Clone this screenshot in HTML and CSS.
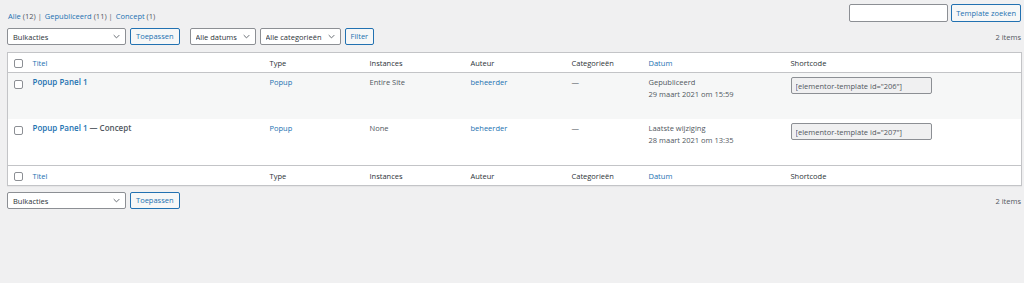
FILE: index.html
```html
<!DOCTYPE html>
<html lang="nl">
<head>
    <meta charset="UTF-8">
    <title>Templates</title>
    <link rel="stylesheet" href="styles.css">
</head>
<body>
    <div class="wrap">

        <!-- Filters en zoeken -->
        <div class="top-bar">
            <ul class="subsubsub">
                <li><a href="#" class="current">Alle <span class="count">(12)</span></a> |</li>
                <li><a href="#">Gepubliceerd <span class="count">(11)</span></a> |</li>
                <li><a href="#">Concept <span class="count">(1)</span></a></li>
            </ul>
            <div class="search-box">
                <input type="search" class="search-input">
                <button class="button">Template zoeken</button>
            </div>
        </div>

        <div class="tablenav">
            <div class="actions">
                <span class="select-wrap wide">
                    <select><option>Bulkacties</option></select>
                    <svg class="chevron" viewBox="0 0 10 6"><path d="M1 1l4 4 4-4" /></svg>
                </span>
                <button class="button">Toepassen</button>
            </div>
            <div class="actions">
                <span class="select-wrap dates">
                    <select><option>Alle datums</option></select>
                    <svg class="chevron" viewBox="0 0 10 6"><path d="M1 1l4 4 4-4" /></svg>
                </span>
                <span class="select-wrap cats">
                    <select><option>Alle categorieën</option></select>
                    <svg class="chevron" viewBox="0 0 10 6"><path d="M1 1l4 4 4-4" /></svg>
                </span>
                <button class="button">Filter</button>
            </div>
            <div class="num-items">2 items</div>
        </div>

        <!-- Tabel met templates -->
        <table class="list-table">
            <colgroup>
                <col class="c-cb">
                <col class="c-title">
                <col class="c-type">
                <col class="c-inst">
                <col class="c-author">
                <col class="c-cat">
                <col class="c-date">
                <col class="c-short">
            </colgroup>
            <thead>
                <tr>
                    <td class="check"><span class="checkbox"></span></td>
                    <th><a href="#">Titel</a></th>
                    <th>Type</th>
                    <th>Instances</th>
                    <th>Auteur</th>
                    <th>Categorieën</th>
                    <th><a href="#">Datum</a></th>
                    <th>Shortcode</th>
                </tr>
            </thead>
            <tbody>
                <tr class="alt">
                    <td class="check"><span class="checkbox"></span></td>
                    <td><a href="#" class="row-title">Popup Panel 1</a></td>
                    <td><a href="#">Popup</a></td>
                    <td>Entire Site</td>
                    <td><a href="#">beheerder</a></td>
                    <td>—</td>
                    <td>Gepubliceerd<br>29 maart 2021 om 15:59</td>
                    <td><input type="text" class="shortcode" value='[elementor-template id="206"]' readonly></td>
                </tr>
                <tr>
                    <td class="check"><span class="checkbox"></span></td>
                    <td><a href="#" class="row-title">Popup Panel 1</a> <span class="state">— Concept</span></td>
                    <td><a href="#">Popup</a></td>
                    <td>None</td>
                    <td><a href="#">beheerder</a></td>
                    <td>—</td>
                    <td>Laatste wijziging<br>28 maart 2021 om 13:35</td>
                    <td><input type="text" class="shortcode" value='[elementor-template id="207"]' readonly></td>
                </tr>
            </tbody>
            <tfoot>
                <tr>
                    <td class="check"><span class="checkbox"></span></td>
                    <th><a href="#">Titel</a></th>
                    <th>Type</th>
                    <th>Instances</th>
                    <th>Auteur</th>
                    <th>Categorieën</th>
                    <th><a href="#">Datum</a></th>
                    <th>Shortcode</th>
                </tr>
            </tfoot>
        </table>

        <div class="tablenav bottom">
            <div class="actions">
                <span class="select-wrap wide">
                    <select><option>Bulkacties</option></select>
                    <svg class="chevron" viewBox="0 0 10 6"><path d="M1 1l4 4 4-4" /></svg>
                </span>
                <button class="button">Toepassen</button>
            </div>
            <div class="num-items">2 items</div>
        </div>

    </div>
</body>
</html>
```

FILE: styles.css
```css
/* Basis */
body {
    font-family: "Open Sans", "Noto Sans", Arial, sans-serif;
    font-size: 7.5px;
    background-color: #f0f0f1;
    color: #3c434a;
    margin: 0;
    padding: 0;
}

a {
    color: #2271b1;
    text-decoration: none;
}

.wrap {
    padding: 3px 3px 0 7px;
}

/* Bovenste balk */
.top-bar {
    display: flex;
    justify-content: space-between;
    align-items: flex-start;
    height: 25px;
}

.subsubsub {
    list-style: none;
    margin: 0;
    padding: 7px 0 0 1px;
    display: flex;
    gap: 3px;
    color: #646970;
    line-height: 12px;
}

.subsubsub .count {
    color: #50575e;
}

.search-box {
    display: flex;
    gap: 3px;
    margin-top: 1px;
}

.search-input {
    width: 99px;
    height: 18px;
    box-sizing: border-box;
    border: 1px solid #8c8f94;
    border-radius: 2px;
    background: #fff;
    margin: 0;
}

.button {
    font-family: inherit;
    font-size: 7.5px;
    height: 17px;
    padding: 0 5px;
    margin: 0;
    color: #2271b1;
    border: 1px solid #2271b1;
    border-radius: 2px;
    background: #f6f7f7;
    box-sizing: border-box;
    line-height: 15px;
}

.search-box .button {
    height: 18px;
    padding: 0 4px;
}

/* Tablenav */
.tablenav {
    display: flex;
    align-items: center;
    gap: 10px;
    height: 17px;
    margin-bottom: 7px;
}

.tablenav.bottom {
    margin-top: 6px;
}

.actions {
    display: flex;
    align-items: center;
    gap: 4px;
}

.num-items {
    margin-left: auto;
    color: #50575e;
    padding-right: 0;
}

.select-wrap {
    position: relative;
    display: inline-block;
    height: 17px;
}

.select-wrap select {
    appearance: none;
    -webkit-appearance: none;
    font-family: inherit;
    font-size: 7.5px;
    color: #2c3338;
    background: #fff;
    border: 1px solid #8c8f94;
    border-radius: 2px;
    height: 17px;
    padding: 0 0 0 5px;
    margin: 0;
    box-sizing: border-box;
    width: 100%;
}

.select-wrap.wide { width: 119px; }
.select-wrap.dates { width: 66px; }
.select-wrap.cats { width: 81px; }

.chevron {
    position: absolute;
    right: 6px;
    top: 6px;
    width: 7px;
    height: 5px;
    fill: none;
    stroke: #646970;
    stroke-width: 1.4;
    pointer-events: none;
}

/* Tabel */
.list-table {
    width: 1014px;
    border-collapse: collapse;
    table-layout: fixed;
    background: #fff;
    border: 1px solid #c3c4c7;
    box-shadow: 0 1px 1px rgba(0, 0, 0, 0.04);
}

.c-cb { width: 20px; }
.c-title { width: 237px; }
.c-type { width: 100px; }
.c-inst { width: 101px; }
.c-author { width: 101px; }
.c-cat { width: 77px; }
.c-date { width: 142px; }
.c-short { width: 236px; }

.list-table th {
    font-weight: normal;
    text-align: left;
    color: #2c3338;
    height: 19px;
    padding: 0 5px;
    line-height: 12px;
}

.list-table thead tr {
    border-bottom: 1px solid #c3c4c7;
}

.list-table tfoot tr {
    border-top: 1px solid #c3c4c7;
}

.list-table td {
    vertical-align: top;
    padding: 3px 5px 0;
    height: 43px;
    line-height: 12px;
    color: #50575e;
}

.list-table thead td,
.list-table tfoot td {
    height: 19px;
    padding-top: 0;
    vertical-align: middle;
}

.list-table tr.alt {
    background: #f6f7f7;
}

.list-table td.check {
    padding: 3px 0 0 6px;
}

.list-table thead td.check,
.list-table tfoot td.check {
    padding: 0 0 0 6px;
}

.checkbox {
    display: inline-block;
    width: 9px;
    height: 9px;
    border: 1px solid #8c8f94;
    border-radius: 2px;
    background: #fff;
    box-sizing: border-box;
    vertical-align: middle;
}

.list-table tbody td.check .checkbox {
    margin-top: 2px;
}

.row-title {
    font-weight: 600;
    font-size: 8px;
}

.state {
    color: #50575e;
    font-weight: 600;
    font-size: 8px;
}

.shortcode {
    font-family: inherit;
    font-size: 7.5px;
    width: 141px;
    height: 17px;
    box-sizing: border-box;
    border: 1px solid #8c8f94;
    border-radius: 2px;
    background: #f0f0f1;
    color: #50575e;
    padding: 0 4px;
    margin: 1px 0 0 0;
}
```
